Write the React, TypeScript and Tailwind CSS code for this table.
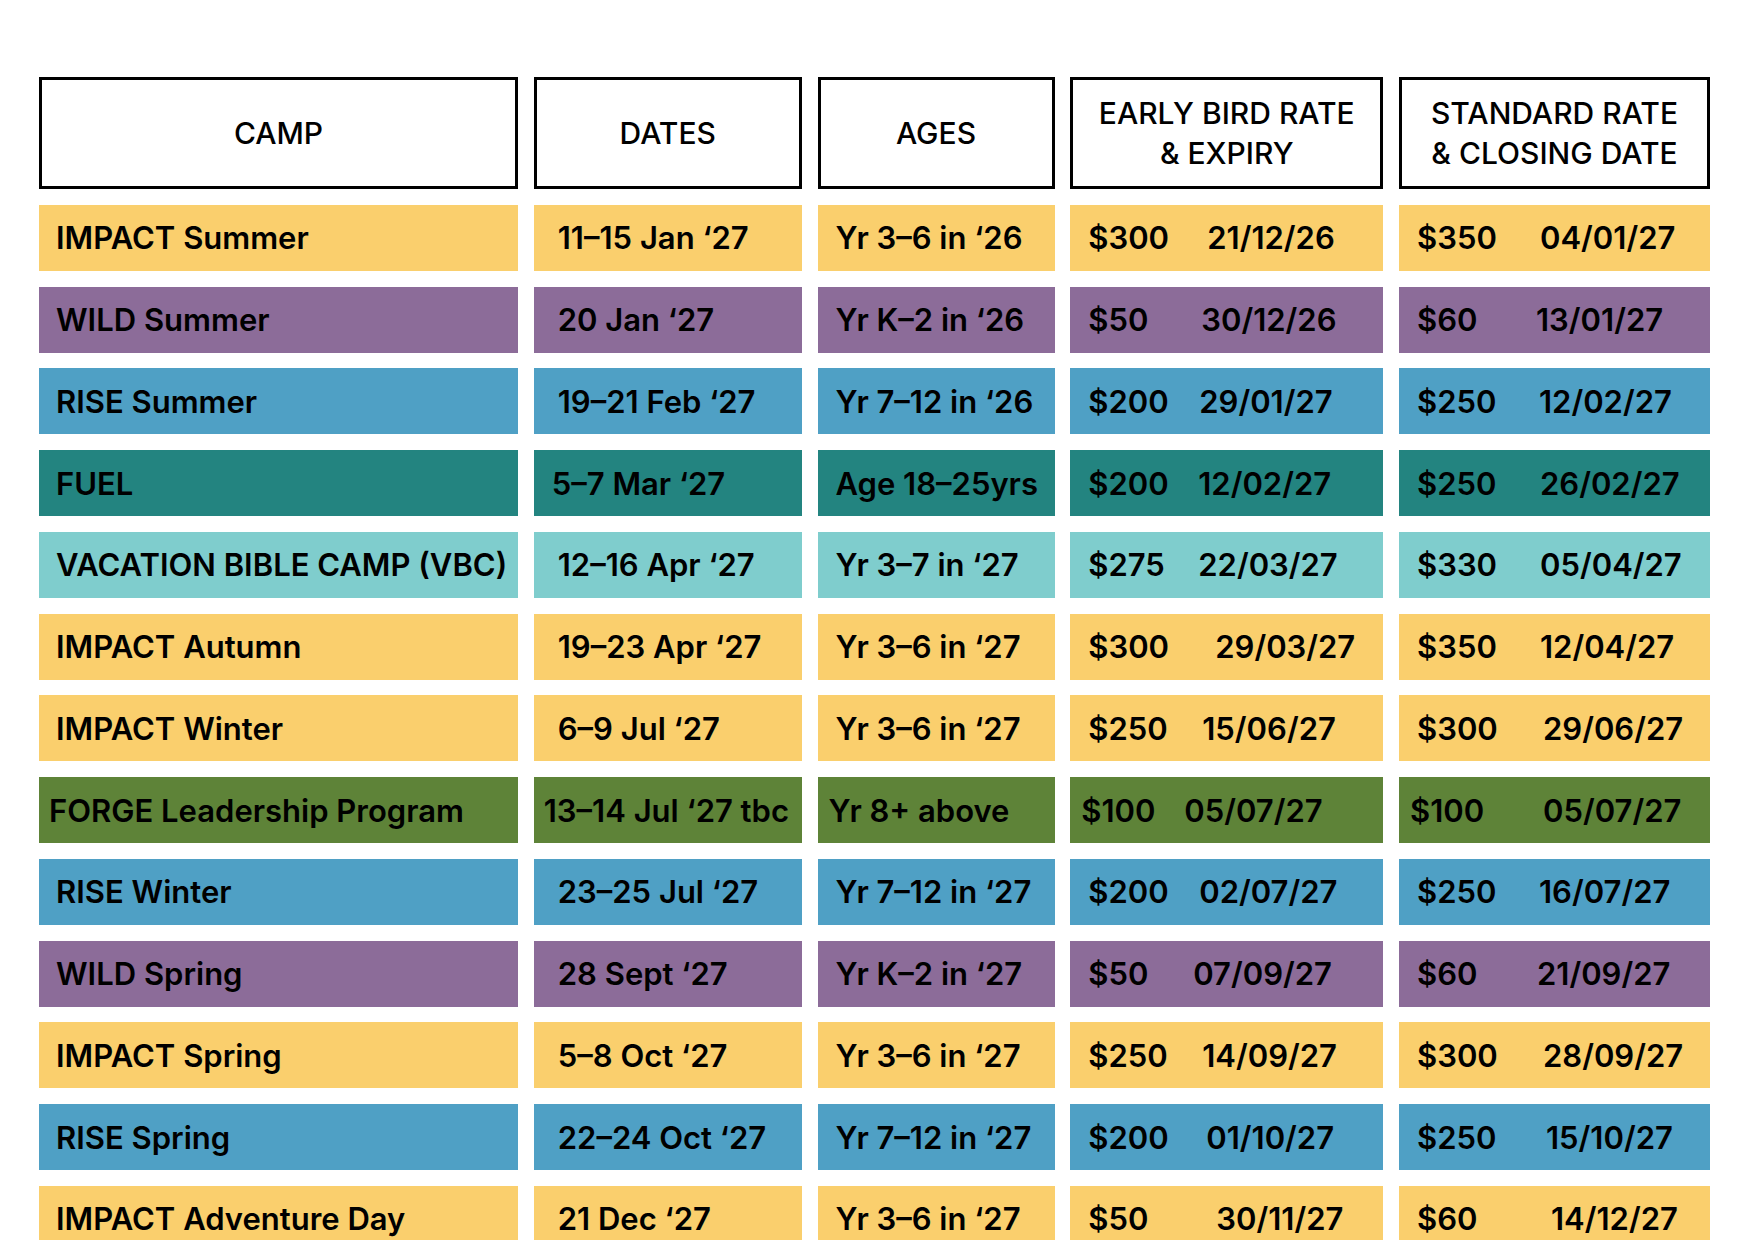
type Row = {
  camp: string;
  dates: string;
  ages: string;
  eb: string;
  ebDate: string;
  std: string;
  stdDate: string;
  bg: string;
  campPad: string;
  datesPad: string;
  agesPad: string;
  pricePad: string;
  ebW: string;
  stdW: string;
};

const YELLOW = 'bg-[#facf6d]';
const PURPLE = 'bg-[#8c6c99]';
const BLUE = 'bg-[#4fa0c5]';
const TEAL = 'bg-[#238480]';
const AQUA = 'bg-[#7fcdcd]';
const GREEN = 'bg-[#5e8338]';

const base = { campPad: 'pl-[17px]', datesPad: 'pl-[24px]', agesPad: 'pl-[18px]', pricePad: 'pl-[18px]' };

const rows: Row[] = [
  { ...base, camp: 'IMPACT Summer', dates: '11–15 Jan ‘27', ages: 'Yr 3–6 in ‘26', eb: '$300', ebDate: '21/12/26', std: '$350', stdDate: '04/01/27', bg: YELLOW, ebW: 'w-[119px]', stdW: 'w-[123px]' },
  { ...base, camp: 'WILD Summer', dates: '20 Jan ‘27', ages: 'Yr K–2 in ‘26', eb: '$50', ebDate: '30/12/26', std: '$60', stdDate: '13/01/27', bg: PURPLE, ebW: 'w-[113px]', stdW: 'w-[119px]' },
  { ...base, camp: 'RISE Summer', dates: '19–21 Feb ‘27', ages: 'Yr 7–12 in ‘26', eb: '$200', ebDate: '29/01/27', std: '$250', stdDate: '12/02/27', bg: BLUE, ebW: 'w-[111px]', stdW: 'w-[122px]' },
  { ...base, datesPad: 'pl-[18px]', camp: 'FUEL', dates: '5–7 Mar ‘27', ages: 'Age 18–25yrs', eb: '$200', ebDate: '12/02/27', std: '$250', stdDate: '26/02/27', bg: TEAL, ebW: 'w-[110px]', stdW: 'w-[123px]' },
  { ...base, camp: 'VACATION BIBLE CAMP (VBC)', dates: '12–16 Apr ‘27', ages: 'Yr 3–7 in ‘27', eb: '$275', ebDate: '22/03/27', std: '$330', stdDate: '05/04/27', bg: AQUA, ebW: 'w-[110px]', stdW: 'w-[123px]' },
  { ...base, camp: 'IMPACT Autumn', dates: '19–23 Apr ‘27', ages: 'Yr 3–6 in ‘27', eb: '$300', ebDate: '29/03/27', std: '$350', stdDate: '12/04/27', bg: YELLOW, ebW: 'w-[127px]', stdW: 'w-[123px]' },
  { ...base, camp: 'IMPACT Winter', dates: '6–9 Jul ‘27', ages: 'Yr 3–6 in ‘27', eb: '$250', ebDate: '15/06/27', std: '$300', stdDate: '29/06/27', bg: YELLOW, ebW: 'w-[114px]', stdW: 'w-[126px]' },
  { campPad: 'pl-[10px]', datesPad: 'pl-[10px]', agesPad: 'pl-[11px]', pricePad: 'pl-[11px]', camp: 'FORGE Leadership Program', dates: '13–14 Jul ‘27 tbc', ages: 'Yr 8+ above', eb: '$100', ebDate: '05/07/27', std: '$100', stdDate: '05/07/27', bg: GREEN, ebW: 'w-[103px]', stdW: 'w-[133px]' },
  { ...base, camp: 'RISE Winter', dates: '23–25 Jul ‘27', ages: 'Yr 7–12 in ‘27', eb: '$200', ebDate: '02/07/27', std: '$250', stdDate: '16/07/27', bg: BLUE, ebW: 'w-[111px]', stdW: 'w-[122px]' },
  { ...base, camp: 'WILD Spring', dates: '28 Sept ‘27', ages: 'Yr K–2 in ‘27', eb: '$50', ebDate: '07/09/27', std: '$60', stdDate: '21/09/27', bg: PURPLE, ebW: 'w-[105px]', stdW: 'w-[120px]' },
  { ...base, camp: 'IMPACT Spring', dates: '5–8 Oct ‘27', ages: 'Yr 3–6 in ‘27', eb: '$250', ebDate: '14/09/27', std: '$300', stdDate: '28/09/27', bg: YELLOW, ebW: 'w-[114px]', stdW: 'w-[126px]' },
  { ...base, camp: 'RISE Spring', dates: '22–24 Oct ‘27', ages: 'Yr 7–12 in ‘27', eb: '$200', ebDate: '01/10/27', std: '$250', stdDate: '15/10/27', bg: BLUE, ebW: 'w-[118px]', stdW: 'w-[129px]' },
  { ...base, camp: 'IMPACT Adventure Day', dates: '21 Dec ‘27', ages: 'Yr 3–6 in ‘27', eb: '$50', ebDate: '30/11/27', std: '$60', stdDate: '14/12/27', bg: YELLOW, ebW: 'w-[128px]', stdW: 'w-[134px]' },
];

const headers = [['CAMP'], ['DATES'], ['AGES'], ['EARLY BIRD RATE', '& EXPIRY'], ['STANDARD RATE', '& CLOSING DATE']];

export default function App() {
  return (
    <div className="h-[1240px] w-[1748px] overflow-hidden bg-white pl-[39px] pt-[77px] font-['Inter','Liberation_Sans',sans-serif] text-black">
      <div className="grid grid-cols-[479px_268px_237px_313px_311px] gap-x-[15.75px] gap-y-[15.75px]">
        {/* header boxes */}
        {headers.map((lines) => (
          <div
            key={lines[0]}
            className="flex h-[112px] flex-col items-center justify-center border-[3px] border-black text-center text-[30px] font-medium leading-[40px]"
          >
            {lines.map((l) => (
              <span key={l}>{l}</span>
            ))}
          </div>
        ))}

        {rows.map((r) => (
          <div key={r.camp} className="contents text-[31px] font-semibold leading-none whitespace-nowrap">
            <div className={`flex h-[66px] items-center ${r.bg} ${r.campPad}`}>{r.camp}</div>
            <div className={`flex h-[66px] items-center ${r.bg} ${r.datesPad}`}>{r.dates}</div>
            <div className={`flex h-[66px] items-center ${r.bg} ${r.agesPad}`}>{r.ages}</div>
            <div className={`flex h-[66px] items-center ${r.bg} ${r.pricePad}`}>
              <span className={`shrink-0 ${r.ebW}`}>{r.eb}</span>
              <span>{r.ebDate}</span>
            </div>
            <div className={`flex h-[66px] items-center ${r.bg} ${r.pricePad}`}>
              <span className={`shrink-0 ${r.stdW}`}>{r.std}</span>
              <span>{r.stdDate}</span>
            </div>
          </div>
        ))}
      </div>
    </div>
  );
}
